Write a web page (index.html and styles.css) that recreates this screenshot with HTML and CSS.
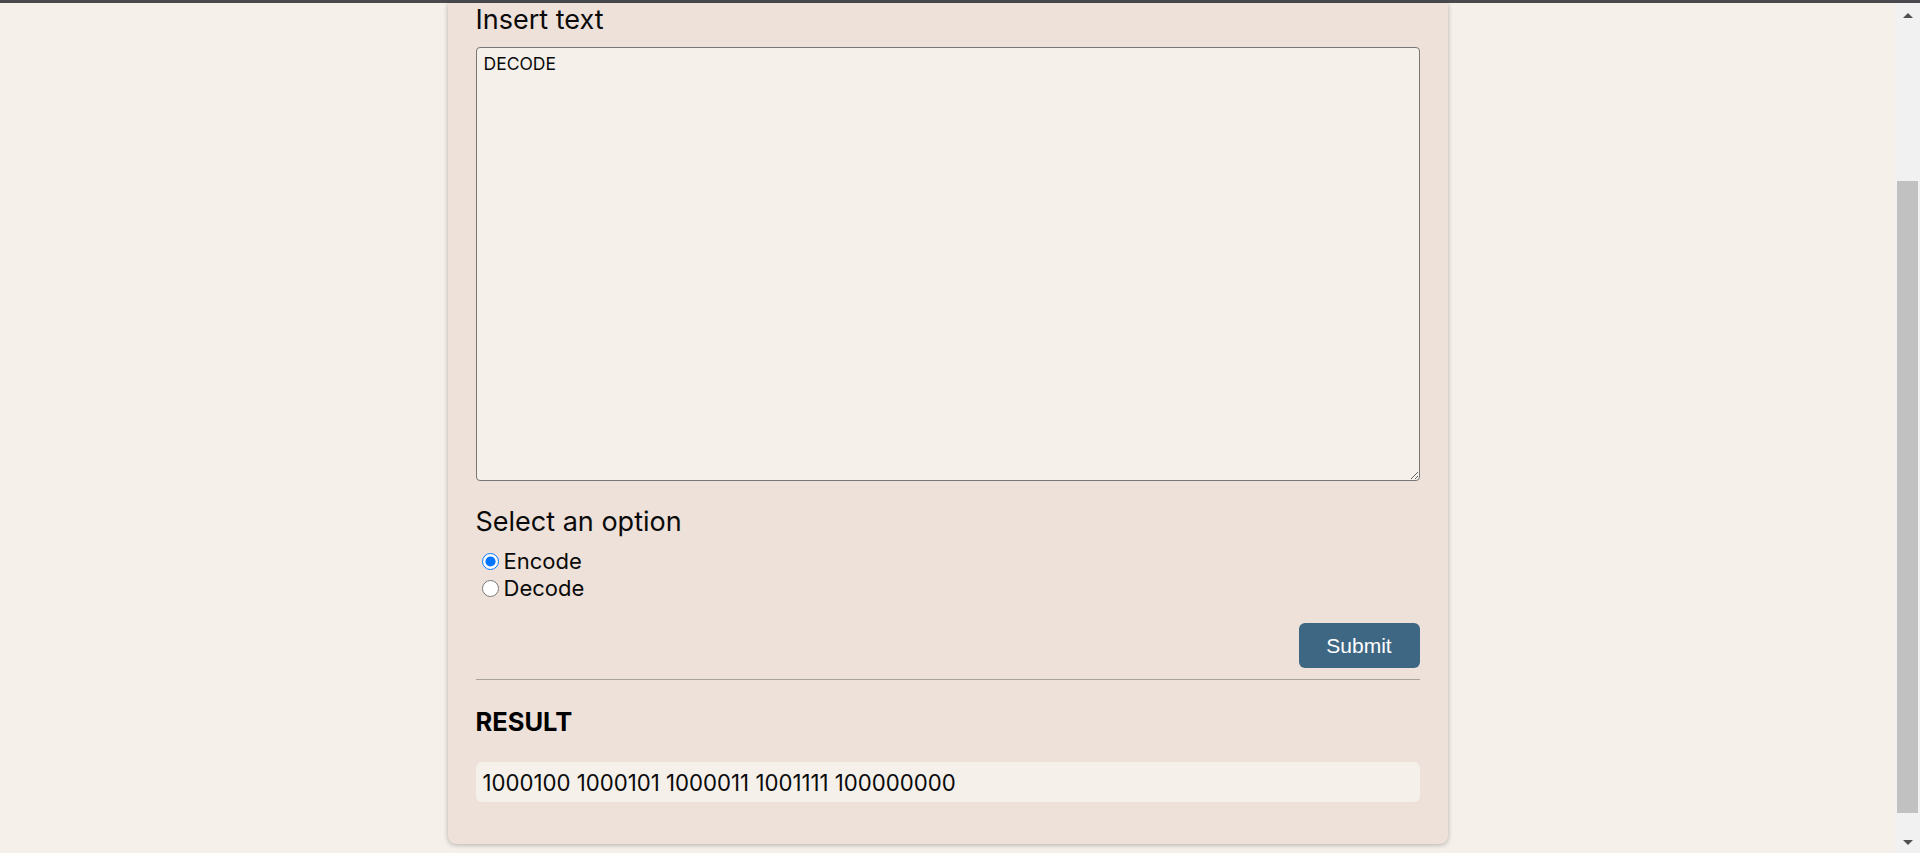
FILE: index.html
```html
<!DOCTYPE html>
<html lang="en">
<head>
<meta charset="utf-8">
<title>Binary encoder</title>
<link rel="stylesheet" href="styles.css">
</head>
<body>
<div class="topbar"></div>
<div class="screen">
  <main class="page">
    <section class="card">
      <label class="label" for="txt">Insert text</label>
      <textarea id="txt" class="input">DECODE</textarea>
      <div class="label option-label">Select an option</div>
      <div class="options">
        <label class="radio"><input type="radio" name="op" checked><span>Encode</span></label>
        <label class="radio"><input type="radio" name="op"><span>Decode</span></label>
      </div>
      <div class="actions"><button class="submit" type="button">Submit</button></div>
      <hr class="divider">
      <h2 class="result-title">RESULT</h2>
      <div class="result">1000100 1000101 1000011 1001111 100000000</div>
    </section>
  </main>
  <div class="scrollbar">
    <div class="arrow arrow-up"></div>
    <div class="track">
      <div class="thumb"></div>
    </div>
    <div class="arrow arrow-down"></div>
  </div>
</div>
</body>
</html>
```

FILE: styles.css
```css
* { box-sizing: border-box; }
html, body {
  margin: 0;
  padding: 0;
  height: 100%;
  overflow: hidden;
}
body {
  background: #f5f0ea;
  font-family: Inter, "Noto Sans", sans-serif;
  color: #0a0a0a;
}
.topbar {
  height: 3px;
  background: #4a4a4e;
}
.screen {
  display: flex;
  height: 850px;
}
.page {
  flex: 1;
  min-width: 0;
}
.card {
  width: 1000px;
  margin: 0 auto;
  background: #eee1d9;
  border-radius: 0 0 8px 8px;
  box-shadow: 0 1px 5px rgba(0, 0, 0, 0.28);
  padding: 0 28px 42px;
  display: flex;
  flex-direction: column;
}
.label {
  display: block;
  font-size: 27px;
  line-height: 33px;
  color: #0a0a0a;
}
.input {
  display: block;
  margin-top: 11px;
  width: 944px;
  height: 434px;
  background: #f5f0ea;
  border: 1px solid #767676;
  border-radius: 4px;
  padding: 5px 7px;
  font-family: Inter, "Noto Sans", sans-serif;
  font-size: 17.5px;
  line-height: 21px;
  color: #0a0a0a;
  resize: both;
}
.option-label {
  margin-top: 24px;
}
.options {
  margin-top: 10px;
  display: flex;
  flex-direction: column;
}
.radio {
  display: flex;
  align-items: center;
  font-size: 22px;
  line-height: 27px;
  height: 27px;
}
.radio input {
  width: 17px;
  height: 17px;
  margin: 0 5px 0 6px;
}
.actions {
  display: flex;
  justify-content: flex-end;
  margin-top: 21px;
}
.submit {
  width: 121px;
  height: 45px;
  background: #3e6783;
  color: #fff;
  border: none;
  border-radius: 6px;
  font-family: "Liberation Sans", Arial, sans-serif;
  font-size: 21px;
}
.divider {
  margin: 11px 0 0;
  border: none;
  border-top: 1px solid #a7a29e;
  height: 0;
}
.result-title {
  margin: 26px 0 0;
  font-size: 25.5px;
  line-height: 32px;
  font-weight: 700;
  color: #000;
}
.result {
  margin-top: 24px;
  height: 40px;
  background: #f5f0ea;
  border-radius: 6px;
  padding: 0 7px;
  display: flex;
  align-items: center;
  font-size: 22.2px;
}
.scrollbar {
  width: 25px;
  background: #f1f1f1;
  display: flex;
  flex-direction: column;
  align-items: center;
}
.arrow {
  width: 0;
  height: 0;
  border-left: 5px solid transparent;
  border-right: 5px solid transparent;
}
.arrow-up {
  margin-top: 10px;
  border-bottom: 5px solid #505050;
}
.arrow-down {
  margin-bottom: 8px;
  border-top: 5px solid #505050;
}
.track {
  flex: 1;
  width: 100%;
  padding: 163px 2px 27px;
  display: flex;
}
.thumb {
  flex: 1;
  background: #c1c1c1;
}
```
